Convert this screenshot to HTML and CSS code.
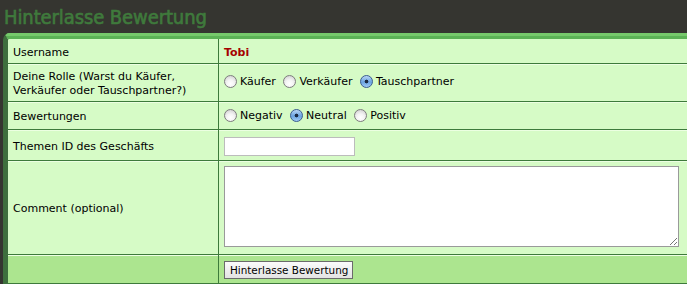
FILE: index.html
```html
<!DOCTYPE html>
<html>
<head>
<meta charset="utf-8">
<link rel="stylesheet" href="styles.css">
</head>
<body>
<h1 class="title">Hinterlasse Bewertung</h1>
<div class="box">
  <table class="form">
    <tr class="r1">
      <td class="lab">Username</td>
      <td class="val"><span class="user">Tobi</span></td>
    </tr>
    <tr class="r2">
      <td class="lab">Deine Rolle (Warst du Käufer,<br>Verkäufer oder Tauschpartner?)</td>
      <td class="val">
        <label class="opt"><span class="radio"></span>Käufer</label>
        <label class="opt"><span class="radio"></span>Verkäufer</label>
        <label class="opt"><span class="radio on"></span>Tauschpartner</label>
      </td>
    </tr>
    <tr class="r3">
      <td class="lab">Bewertungen</td>
      <td class="val">
        <label class="opt"><span class="radio"></span>Negativ</label>
        <label class="opt"><span class="radio on"></span>Neutral</label>
        <label class="opt"><span class="radio"></span>Positiv</label>
      </td>
    </tr>
    <tr class="r4">
      <td class="lab">Themen ID des Geschäfts</td>
      <td class="val"><span class="text"></span></td>
    </tr>
    <tr class="r5">
      <td class="lab">Comment (optional)</td>
      <td class="val"><span class="area"><span class="grip"></span></span></td>
    </tr>
    <tr class="r6">
      <td class="lab"></td>
      <td class="val"><span class="btn">Hinterlasse Bewertung</span></td>
    </tr>
  </table>
</div>
</body>
</html>
```
FILE: styles.css
```css
html, body {
  margin: 0;
  padding: 0;
  background: #353530;
  overflow: hidden;
}
body {
  font-family: "DejaVu Sans", Verdana, sans-serif;
  font-size: 11px;
  color: #000;
}
.title {
  margin: 0;
  padding: 5px 0 0 4px;
  height: 28px;
  box-sizing: border-box;
  font-family: "DejaVu Sans Condensed", "DejaVu Sans", sans-serif;
  font-weight: normal;
  font-size: 20px;
  line-height: 24px;
  color: #3f7a3c;
  letter-spacing: -0.1px;
  -webkit-text-stroke: 0.6px #3f7a3c;
}
.box {
  margin: 5px 0 0 3px;
  width: 700px;
  border-left: 5px solid #3e6f3d;
  border-top: 6px solid #5cb256;
  border-top-left-radius: 7px;
  background: #d6fbc6;
  position: relative;
}
.box::before {
  content: "";
  position: absolute;
  left: -2px;
  right: 0;
  top: -6px;
  height: 3px;
  background: #76c96b;
  border-top-left-radius: 6px;
}
.form {
  border-collapse: collapse;
  width: 100%;
}
.form td {
  padding: 2px 5px 0;
  vertical-align: middle;
  border-bottom: 1px solid #3d7a3b;
  box-shadow: inset 0 1px 0 #ecffe2;
}
.form tr.r1 td { box-shadow: none; }
.form td.lab {
  width: 200px;
  border-right: 1px solid #3d7a3b;
}
.r1 td { height: 22px; }
.r2 td { height: 35px; line-height: 14px; }
.r3 td { height: 25px; }
.r4 td { height: 28px; }
.r5 td { height: 91px; }
.form .r5 td.val { padding-top: 0; padding-bottom: 2px; }
.r6 td { height: 26px; background: #ace58f; }
.user {
  color: #a50000;
  font-weight: bold;
}
.opt {
  display: inline-flex;
  align-items: center;
  margin-right: 4px;
}
.radio {
  display: inline-block;
  width: 13px;
  height: 13px;
  border-radius: 50%;
  box-sizing: border-box;
  border: 1px solid #7d7d7d;
  background: radial-gradient(circle at 50% 70%, #ffffff 0%, #f4f4f4 40%, #c9c9c9 100%);
  margin: 0 3px 0 0;
}
.radio.on {
  border-color: #3d5f8e;
  background: radial-gradient(circle at 50% 50%, #1b2b44 0, #1b2b44 1.6px, transparent 2.2px),
              linear-gradient(#b9d6f5, #6aa3e0 55%, #9fcbf5);
}
.text {
  display: block;
  width: 131px;
  height: 19px;
  box-sizing: border-box;
  border: 1px solid #bcbcbc;
  background: #fff;
}
.area {
  display: block;
  position: relative;
  width: 455px;
  height: 81px;
  box-sizing: border-box;
  border: 1px solid #9a9a9a;
  background: #fff;
}
.grip {
  position: absolute;
  right: 1px;
  bottom: 1px;
  width: 7px;
  height: 7px;
  background: linear-gradient(135deg, transparent 45%, #777 45%, #777 55%, transparent 55%, transparent 72%, #777 72%, #777 82%, transparent 82%);
}
.btn {
  display: inline-block;
  height: 18px;
  line-height: 16px;
  box-sizing: border-box;
  padding: 0 4px 0 5px;
  border: 1px solid #6b6b6b;
  background: linear-gradient(#fbfbfb, #e3e3e3);
  color: #000;
  font-size: 10.4px;
  vertical-align: middle;
}
```
